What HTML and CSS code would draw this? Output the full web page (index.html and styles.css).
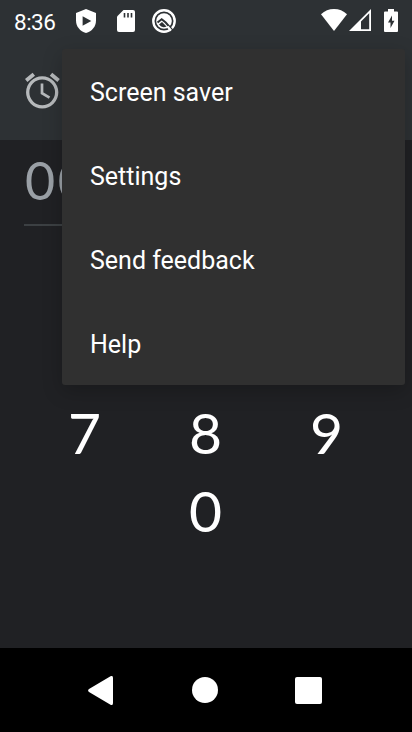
FILE: index.html
```html
<!DOCTYPE html>
<html lang="en">
<head>
<meta charset="utf-8">
<title>Clock</title>
<link rel="stylesheet" href="styles.css">
</head>
<body>
<div class="screen">
  <header class="top">
    <div class="status">
      <span class="time">8:36</span>
      <svg class="shield" width="20" height="24" viewBox="0 0 20 24"><path fill="#fff" d="M10 0 20 4v7.500C20 17.500 16 22.300 10 24 4 22.300 0 17.500 0 11.500V4z"/><path fill="#2d3134" d="M6.600 7.300v9.400L15.300 12z"/></svg>
      <svg class="card" width="18" height="22" viewBox="0 0 18 22"><path fill="#fff" d="M6.500 0H16q2 0 2 2v18q0 2-2 2H2q-2 0-2-2V6.500z"/><path stroke="#2d3134" stroke-width="1.600" d="M7.500 3v4.500M11 3v4.500M14.500 3v4.500"/></svg>
      <svg class="badge" width="24" height="24" viewBox="0 0 24 24"><circle cx="12" cy="12" r="10.700" fill="none" stroke="#fff" stroke-width="2.400"/><circle cx="12" cy="12" r="7.800" fill="#fff"/><path fill="none" stroke="#2d3134" stroke-width="2" d="m5.500 13.500 4.200-3.300 4 3.300 7.300 8.300"/><path fill="#2d3134" d="m7 15.500 3-2.500 4.500 4.500q-4.500 2-7.500-2z"/><path stroke="#fff" stroke-width="2.200" d="m15.500 17.500 3.500 4"/></svg>
      <span class="space"></span>
      <svg class="wifi" width="26" height="22" viewBox="0 0 26 22"><path fill="#fff" d="M0 5.200Q5.500 0 13 0t13 5.200L13 22z"/></svg>
      <svg class="signal" width="22" height="22" viewBox="0 0 22 22"><path fill="#fff" fill-rule="evenodd" d="M22 0v22H0zM20.200 4.300 12 12.500v7.700h8.200z"/></svg>
      <svg class="battery" width="14" height="23" viewBox="0 0 14 23"><path fill="#fff" d="M4 0h6v2.500h3q1 0 1 1V22q0 1-1 1H1q-1 0-1-1V3.500q0-1 1-1h3z"/><path fill="#2d3134" d="M8 6.500 4 13.500h2.500v5.500l4-7.300H8z"/></svg>
    </div>
    <div class="tabs">
      <svg class="alarm" width="36" height="37" viewBox="0 0 36 37"><g fill="none" stroke="#b6b9bb"><circle cx="17.200" cy="20.300" r="14.500" stroke-width="3.300"/><path stroke-width="2.700" d="M17 11.500v9.700l7.500 4.500"/><path stroke-width="3.800" d="m1.200 8.500 7.600-6.300M26 2.200l7.600 6.300"/></g></svg>
    </div>
  </header>
  <main class="timer">
    <div class="duration">00</div>
    <div class="keys">
      <span>7</span><span>8</span><span>9</span>
      <span class="zero">0</span>
    </div>
  </main>
  <nav class="nav">
    <svg class="back" width="25" height="29" viewBox="0 0 25 29"><path fill="#fff" d="M22.500.3Q25-.8 25 2v25q0 2.800-2.500 1.700L1 16Q-.8 14.500 1 13z"/></svg>
    <span class="home"></span>
    <span class="recent"></span>
  </nav>
  <div class="menu">
    <div class="item">Screen saver</div>
    <div class="item">Settings</div>
    <div class="item">Send feedback</div>
    <div class="item">Help</div>
  </div>
</div>
</body>
</html>
```
FILE: styles.css
```css
body {
  margin: 0;
  background: #202124;
  font-family: Roboto, sans-serif;
  color: #fff;
}
svg { display: block; flex: none; }
.screen {
  position: relative;
  display: flex;
  flex-direction: column;
  width: 412px;
  height: 732px;
  overflow: hidden;
}
.top { height: 140px; background: #2d3134; }
.status {
  display: flex;
  align-items: center;
  box-sizing: border-box;
  height: 42px;
  padding: 0 14px 0 14px;
}
.time { width: 62px; font-size: 22.5px; line-height: 44px; letter-spacing: -0.5px; padding-top: 2px; }
.card { margin-left: 21px; }
.badge { margin-left: 17px; }
.space { flex: 1; }
.wifi { margin-top: -2px; }
.signal { margin: -2px 13px 0 2px; }
.battery { margin-top: -1px; }
.tabs { padding: 30px 24px 0 25px; }
.timer { flex: 1; padding: 0 24px; }
.duration {
  height: 84px;
  border-bottom: 2px solid #3c4043;
  font-family: Lato, sans-serif;
  font-size: 52px;
  line-height: 81px;
  letter-spacing: 2.5px;
  text-indent: 1px;
  color: #9aa0a6;
}
.keys {
  display: grid;
  grid-template-columns: repeat(3, 121px);
  grid-auto-rows: 78px;
  padding-top: 167px;
  font-family: Lato, sans-serif;
  font-size: 57px;
  line-height: 78px;
  text-align: center;
}
.zero { grid-column: 2; }
.nav {
  display: flex;
  align-items: center;
  height: 84px;
  padding-left: 88px;
  background: #000;
}
.home { width: 26px; height: 26px; margin-left: 79px; border-radius: 50%; background: #fff; }
.recent { width: 27px; height: 27px; margin-left: 77px; border-radius: 2px; background: #fff; }
.menu {
  position: absolute;
  left: 62px;
  top: 49px;
  width: 343px;
  height: 336px;
  border-radius: 3px;
  background: #303030;
  box-shadow: 0 6px 20px rgba(0, 0, 0, 0.22);
}
.item {
  height: 84px;
  padding-left: 28px;
  font-size: 25px;
  line-height: 87px;
}
```
